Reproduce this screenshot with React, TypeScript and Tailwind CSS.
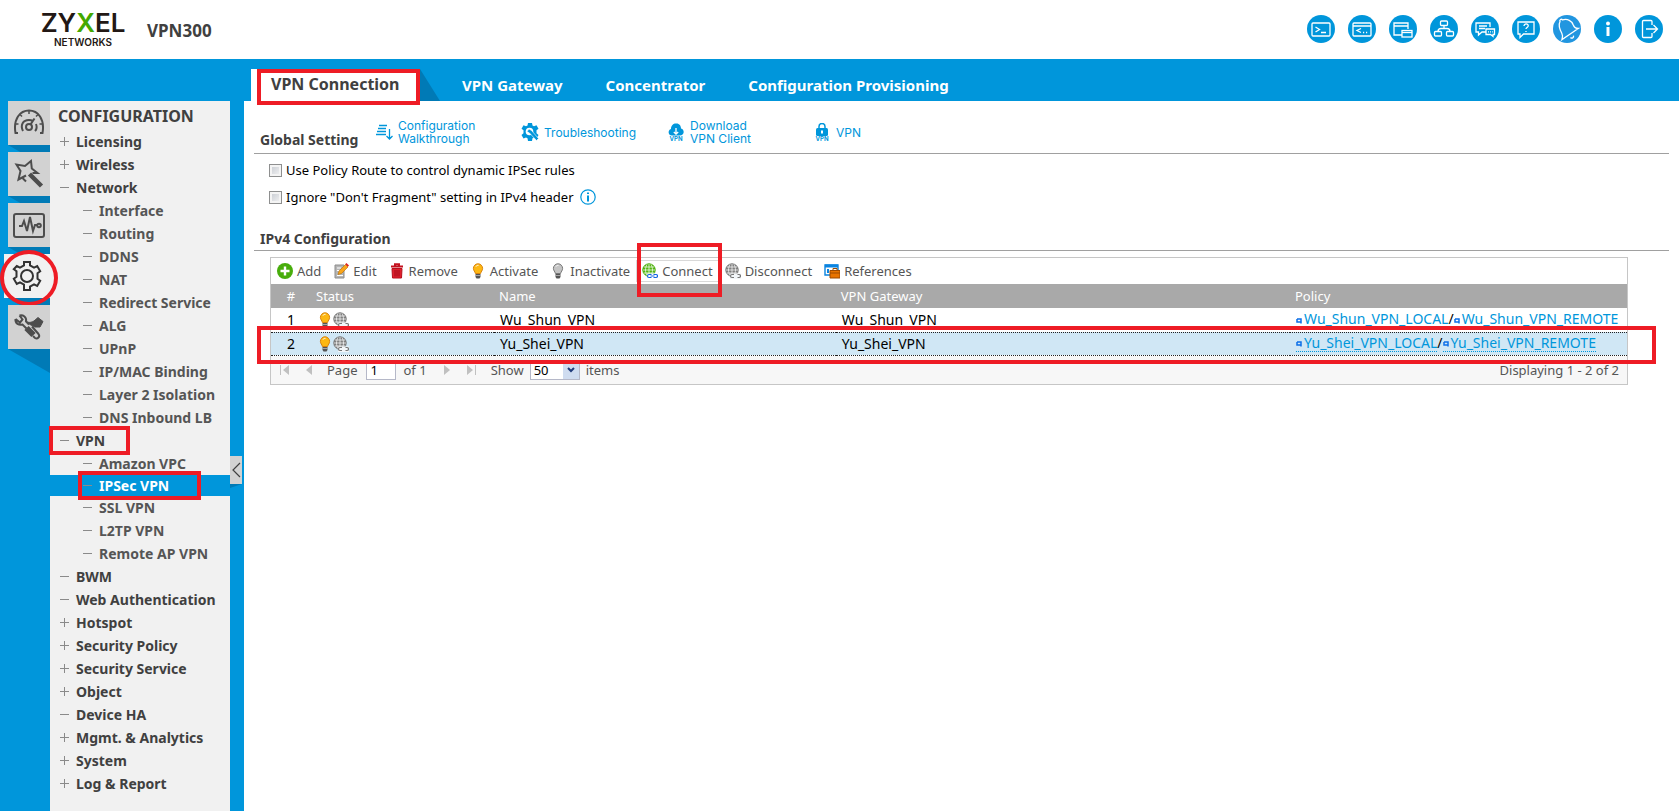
import React, { useState } from 'react';

interface MenuEntry {
  label: string;
  mark: '+' | '-';
  level: 1 | 2;
}

interface Connection {
  id: number;
  name: string;
  gateway: string;
  local: string;
  remote: string;
}

const menu: MenuEntry[] = [
  { label: 'Licensing', mark: '+', level: 1 },
  { label: 'Wireless', mark: '+', level: 1 },
  { label: 'Network', mark: '-', level: 1 },
  { label: 'Interface', mark: '-', level: 2 },
  { label: 'Routing', mark: '-', level: 2 },
  { label: 'DDNS', mark: '-', level: 2 },
  { label: 'NAT', mark: '-', level: 2 },
  { label: 'Redirect Service', mark: '-', level: 2 },
  { label: 'ALG', mark: '-', level: 2 },
  { label: 'UPnP', mark: '-', level: 2 },
  { label: 'IP/MAC Binding', mark: '-', level: 2 },
  { label: 'Layer 2 Isolation', mark: '-', level: 2 },
  { label: 'DNS Inbound LB', mark: '-', level: 2 },
  { label: 'VPN', mark: '-', level: 1 },
  { label: 'Amazon VPC', mark: '-', level: 2 },
  { label: 'IPSec VPN', mark: '-', level: 2 },
  { label: 'SSL VPN', mark: '-', level: 2 },
  { label: 'L2TP VPN', mark: '-', level: 2 },
  { label: 'Remote AP VPN', mark: '-', level: 2 },
  { label: 'BWM', mark: '-', level: 1 },
  { label: 'Web Authentication', mark: '-', level: 1 },
  { label: 'Hotspot', mark: '+', level: 1 },
  { label: 'Security Policy', mark: '+', level: 1 },
  { label: 'Security Service', mark: '+', level: 1 },
  { label: 'Object', mark: '+', level: 1 },
  { label: 'Device HA', mark: '-', level: 1 },
  { label: 'Mgmt. & Analytics', mark: '+', level: 1 },
  { label: 'System', mark: '+', level: 1 },
  { label: 'Log & Report', mark: '+', level: 1 },
];

const connections: Connection[] = [
  {
    id: 1,
    name: 'Wu_Shun_VPN',
    gateway: 'Wu_Shun_VPN',
    local: 'Wu_Shun_VPN_LOCAL',
    remote: 'Wu_Shun_VPN_REMOTE',
  },
  {
    id: 2,
    name: 'Yu_Shei_VPN',
    gateway: 'Yu_Shei_VPN',
    local: 'Yu_Shei_VPN_LOCAL',
    remote: 'Yu_Shei_VPN_REMOTE',
  },
];

// Header shortcuts, drawn in white on a 28px disc
const shortcuts: { label: string; fill?: string; art: React.ReactNode }[] = [
  {
    label: 'Console',
    art: (
      <>
        <rect x="5" y="8" width="18" height="13" rx="1" />
        <path d="M8.500 12l4 2.500-4 2.500M14 17.500h5" />
      </>
    ),
  },
  {
    label: 'CLI',
    art: (
      <>
        <rect x="5" y="8" width="18" height="13" rx="1" />
        <path d="M5 11h18M13 13.500l-4 2 4 2M15 17.500h1.200M18 17.500h1.200" />
      </>
    ),
  },
  {
    label: 'Site Map',
    art: (
      <>
        <path d="M13 20H5V8h14v6M5 11h14" />
        <rect x="13" y="15.500" width="10" height="6.500" />
        <path d="M13 17.500h10" />
      </>
    ),
  },
  {
    label: 'Object Reference',
    art: (
      <>
        <rect x="10.500" y="6" width="7" height="4.500" rx="1" />
        <rect x="4.500" y="16.500" width="7" height="4.500" rx="1" />
        <rect x="16.500" y="16.500" width="7" height="4.500" rx="1" />
        <path d="M14 10.500v3M8 16.500c0-2.500 1-3 3-3h6c2 0 3 .5 3 3" />
      </>
    ),
  },
  {
    label: 'Forum',
    art: (
      <>
        <path d="M15 17h-4l-3.500 3v-3H5V8h14v4M8 11h8M8 13.500h6" />
        <path d="M15 14h8.500v5.500H22v2l-2.500-2H15z" />
        <path d="M17 16.800h1M19 16.800h1M21 16.800h.8" />
      </>
    ),
  },
  {
    label: 'Help',
    art: (
      <>
        <path d="M6 7h16v12H11.500L8 22.500V19H6z" />
        <path d="M12 11c0-3 4.500-2.500 4.200 0-.2 1.500-2.200 1.500-2.200 3M14 16v1" />
      </>
    ),
  },
  {
    label: 'Notifications',
    fill: '#2196e0',
    art: (
      <>
        <path d="M7 6.500c-.8-1.800 1.300-3 2.500-1.600 5-1.500 9.500 1 10.800 5.100.8 2.300 1.500 3.500 5 3.500L9 24.500c1.200-2.500.8-4.200-.2-6.200C6.500 14 5 10.500 7 6.500z" />
        <path d="M17.500 22.500c1.500 1.500 3.500 0 3-1.800" />
      </>
    ),
  },
  {
    label: 'About',
    art: (
      <>
        <circle cx="14" cy="8.500" r="1.300" fill="#fff" />
        <path d="M14 12v9" strokeWidth="3" />
      </>
    ),
  },
  {
    label: 'Logout',
    art: (
      <>
        <path d="M17 10V6.500a1 1 0 0 0-1-1H8.500a1 1 0 0 0-1 1v15a1 1 0 0 0 1 1H16a1 1 0 0 0 1-1V18" />
        <path d="M11 14h11M18.500 10l4 4-4 4" />
      </>
    ),
  },
];

const railTabs: { label: string; art: React.ReactNode }[] = [
  {
    label: 'Dashboard',
    art: (
      <>
        <path d="M5 26H2.500C0 12 7 3.500 16 3.500S32 12 29.500 26H27" />
        <path d="M16 4v3M7 7.500l2 2M25 7.500l-2 2M2.500 17h3M26.500 17h3" strokeWidth="1.500" />
        <path d="M10 24c-3-6 0-11 6-11 2 0 3 .5 4 1M23 17c1 2.500 1 5-1 7" />
        <circle cx="16" cy="20" r="3" />
        <path d="M17.500 17.500l4-6" />
      </>
    ),
  },
  {
    label: 'Wizard',
    art: (
      <>
        <path d="M13 17.500l-7.500 4 2-8.500-4-6.500 8.500 1.500 6-5 .8 7.500 5.700 4.500h-5" />
        <path d="M16.500 16L28.500 28" strokeWidth="4.500" />
        <path d="M9.500 20l3.500 3.500" />
      </>
    ),
  },
  {
    label: 'Monitor',
    art: (
      <>
        <rect x="1" y="5" width="30" height="23" rx="2" />
        <path d="M6 17h3l2-5 3 10 3-14 3 14 2-6h2" />
        <circle cx="26" cy="16.500" r="1.800" />
      </>
    ),
  },
  {
    label: 'Configuration',
    art: (
      <>
        <path d="M13 5.500V2h6v3.500l4 2.200 3.200-1.700 3 5.200-2.700 2v5.600l2.700 2-3 5.200-3.200-1.700-4 2.200V30h-6v-5.500l-4-2.200L5.800 24l-3-5.200 2.700-2v-5.600l-2.700-2L5.800 6 9 7.700z" />
        <circle cx="16" cy="16" r="6" />
      </>
    ),
  },
  {
    label: 'Maintenance',
    art: (
      <>
        <path d="M2.500 8c-.5 4.500 3.500 6.500 7 5.500l4 4M6.500 4.500c3.500-1 7.500 1.500 6.500 6l3 3M6.500 4.500l3 4-2.500 3-4.500-3.500" />
        <path d="M14 11c3 1 5 0 7-1l4-3.500 5 4-3 5.500h-5l-5-2.500z" fill="#4d4d4d" strokeWidth="1" />
        <path d="M13.500 17l7 7" strokeWidth="6" />
        <path d="M19 15.500l6.500 7.500c2 2.500-1 5.500-3.500 4l-2-2" />
      </>
    ),
  },
];

// Red callout frames laid over the parts of the page to look at
const callout = 'pointer-events-none absolute z-20 border-4 border-[#ee1c25]';

function Bulb({ on }: { on: boolean }) {
  return (
    <svg viewBox="0 0 16 16" className="h-4 w-4 shrink-0">
      <path
        d="M8 .8a4.600 4.600 0 0 1 4.600 4.600c0 2.200-1.600 3-2 5.100H5.400c-.4-2.100-2-2.900-2-5.100A4.600 4.600 0 0 1 8 .8z"
        fill={on ? '#fdb813' : '#c4c4c4'}
        stroke={on ? '#d9820b' : '#777'}
      />
      <path d="M6 3.500c.5-.9 1.500-1.300 2.500-1.200" stroke="#fff" fill="none" />
      <path d="M5.500 11h5v3l-1 1.500h-3l-1-1.500z" fill="#555" />
      <path d="M5.500 12.500h5" stroke="#bbb" strokeWidth=".8" />
    </svg>
  );
}

function Globe({ linked }: { linked: boolean }) {
  const color = linked ? '#4caf0f' : '#7a7a7a';
  return (
    <svg viewBox="0 0 16 16" className="h-4 w-4 shrink-0" fill="none">
      <circle cx="7" cy="7" r="6.200" fill={linked ? '#54b512' : '#808080'} stroke={color} />
      <path
        d="M7 1v12M1 7h12M2 4h10M2 10h10M5 1.500C3 5 3 9 5 12.500M9 1.500c2 3.500 2 7.500 0 11"
        stroke="#fff"
        strokeWidth=".7"
      />
      <path d="M5 10.500h11V16H5z" fill={linked ? '#fff' : '#f2f6f9'} />
      <path
        d={
          linked
            ? 'M9.500 11.500H7a1.500 1.500 0 0 0 0 3h2.500M11.500 11.500H14a1.500 1.500 0 0 1 0 3h-2.500M8.500 13h4'
            : 'M9 11.500H7a1.500 1.500 0 0 0 0 3h2M12.500 11.500h1.500a1.500 1.500 0 0 1 0 3h-1.500'
        }
        stroke={linked ? '#1565e0' : '#777'}
        strokeWidth="1.200"
      />
    </svg>
  );
}

const toolbar: { label: string; icon: React.ReactNode }[] = [
  {
    label: 'Add',
    icon: (
      <svg viewBox="0 0 16 16" className="h-4 w-4 shrink-0">
        <circle cx="8" cy="8" r="8" fill="#48ad0c" />
        <path d="M8 3.500v9M3.500 8h9" stroke="#fff" strokeWidth="2.400" />
      </svg>
    ),
  },
  {
    label: 'Edit',
    icon: (
      <svg viewBox="0 0 16 16" className="h-4 w-4 shrink-0">
        <path d="M2 2h9v13H2z" fill="#b5b5b5" stroke="#8d8d8d" />
        <path d="M4 5h4M4 7.500h3M4 12.500h6" stroke="#fff" />
        <path d="M5 11.500l1-3.500 6.500-6.500 2.500 2.500L8.500 10.500z" fill="#f9a51a" stroke="#b96b00" strokeWidth=".6" />
        <path d="M12.200 1.200L13.400 0 16 2.600 14.800 3.800z" fill="#d22" />
      </svg>
    ),
  },
  {
    label: 'Remove',
    icon: (
      <svg viewBox="0 0 16 16" className="h-4 w-4 shrink-0">
        <path d="M2 3.500h12M6 2.500V1.300h4v1.200" stroke="#c4121f" strokeWidth="2" fill="none" />
        <path d="M3 5.500h10L12.500 15h-9z" fill="#e01f2d" stroke="#b50f1b" />
        <path d="M6 7v6.500M8 7v6.500M10 7v6.500" stroke="#8f0711" strokeWidth=".8" />
      </svg>
    ),
  },
  { label: 'Activate', icon: <Bulb on /> },
  { label: 'Inactivate', icon: <Bulb on={false} /> },
  { label: 'Connect', icon: <Globe linked /> },
  { label: 'Disconnect', icon: <Globe linked={false} /> },
  {
    label: 'References',
    icon: (
      <svg viewBox="0 0 16 16" className="h-4 w-4 shrink-0">
        <path d="M1 2h13v10H1z" fill="#fff" stroke="#0a84e0" strokeWidth="1.400" />
        <path d="M1 3h13" stroke="#0a84e0" strokeWidth="3" />
        <path d="M3 6h2v4H3z" fill="#0a84e0" />
        <path d="M6 7.500h10V15H6z" fill="#e87400" stroke="#9c4a00" />
        <path d="M9 7V5.500h4V7M6 10h10" stroke="#9c4a00" fill="none" />
      </svg>
    ),
  },
];

const quickLinks: { label: React.ReactNode; width: string; icon: React.ReactNode }[] = [
  {
    label: (
      <>
        Configuration
        <br />
        Walkthrough
      </>
    ),
    width: 'w-[146px]',
    icon: (
      <svg viewBox="0 0 18 18" className="h-[18px] w-[18px]" fill="none" stroke="#0096db" strokeWidth="1.300">
        <path d="M4 2.500h8M3 5.500h8M2 8.500h9M1 11.500h10M14.500 6v9.500M11.500 13l3 3 3-3" />
      </svg>
    ),
  },
  {
    label: 'Troubleshooting',
    width: 'w-[146px]',
    icon: (
      <svg viewBox="0 0 18 18" className="h-[18px] w-[18px]">
        <path
          d="M7 0h4l.5 2.500 1.500.8 2.500-1 2 3.400-2 1.600v3l2 1.700-2 3.400-2.500-1-1.500.8L11 18H7l-.5-2.800-1.500-.8-2.500 1-2-3.400 2-1.700v-3l-2-1.600 2-3.400 2.500 1 1.500-.8z"
          fill="#0096db"
        />
        <circle cx="8.500" cy="8.500" r="3.800" fill="#fff" />
        <path d="M8 6l2.500 1.500 7 8-2 2-7-7.500L6 8.500z" fill="#0096db" stroke="#fff" strokeWidth=".6" />
      </svg>
    ),
  },
  {
    label: (
      <>
        Download
        <br />
        VPN Client
      </>
    ),
    width: 'w-[146px]',
    icon: (
      <svg viewBox="0 0 18 18" className="h-[18px] w-[18px]">
        <path d="M5 12.500C1 12.500.5 7 4 6 4 2 7 0 9.500.5c3 0 4.500 2.500 4.500 5 4 1 3.500 7-1 7z" fill="#0096db" />
        <path d="M9 5v6M6.800 9L9 11.200 11.200 9" stroke="#fff" strokeWidth="1.300" fill="none" />
        <text x="9" y="18" textAnchor="middle" fontSize="6" fontWeight="700" fill="#0096db">VPN</text>
      </svg>
    ),
  },
  {
    label: 'VPN',
    width: 'w-[60px]',
    icon: (
      <svg viewBox="0 0 18 18" className="h-[18px] w-[18px]">
        <path d="M6 6V3.500a3 3 0 0 1 6 0V6" stroke="#0096db" strokeWidth="1.500" fill="none" />
        <rect x="3" y="5" width="12" height="8" rx="1.500" fill="#0096db" />
        <path d="M9 7.500v3" stroke="#fff" strokeWidth="2" />
        <text x="9" y="18" textAnchor="middle" fontSize="6" fontWeight="700" fill="#0096db">VPN</text>
      </svg>
    ),
  },
];

function Mark({ kind }: { kind: '+' | '-' }) {
  return (
    <svg viewBox="0 0 9 9" className="h-[9px] w-[9px] shrink-0" stroke="#8a8a8a" fill="none">
      <path d={kind === '+' ? 'M0 4.500h9M4.500 0v9' : 'M0 4.500h9'} />
    </svg>
  );
}

function Tag() {
  return (
    <svg viewBox="0 0 6 6" className="mr-[2px] inline-block h-[6px] w-[6px]" fill="none" stroke="#0b6fe8" strokeWidth="1.500">
      <path d="M1 1h4v4.500M1 1v3h4" />
    </svg>
  );
}

function PageArrow({ label, d }: { label: string; d: string }) {
  return (
    <button type="button" aria-label={label} className="flex h-4 w-4 items-center justify-center">
      <svg viewBox="0 0 12 12" className="h-3 w-3" fill="#c0c0c0" stroke="none">
        <path d={d} />
      </svg>
    </button>
  );
}

function Header() {
  return (
    <header className="flex h-[59px] items-start justify-between pl-[39px] pr-4">
      <div className="flex items-center gap-5 pt-[10px]">
        <div className="flex w-[88px] flex-col items-center font-[Inter,sans-serif] text-[#231815]">
          <span className="text-[26px] leading-[26px] font-semibold">
            ZY<span className="text-[#43a800]">X</span>EL
          </span>
          <span className="text-[10px] leading-3 font-semibold">NETWORKS</span>
        </div>
        <h1 className="pt-1 text-[17px] font-bold text-[#404040]">VPN300</h1>
      </div>
      <nav className="flex gap-[13px] pt-[15px]">
        {shortcuts.map((item) => (
          <button key={item.label} type="button" aria-label={item.label} className="h-7 w-7">
            <svg viewBox="0 0 28 28" className="h-7 w-7" fill="none" stroke="#fff" strokeWidth="1.300">
              <circle cx="14" cy="14" r="14" fill={item.fill ?? '#0096db'} stroke="none" />
              {item.art}
            </svg>
          </button>
        ))}
      </nav>
    </header>
  );
}

function Rail() {
  return (
    <div className="flex w-[50px] shrink-0 flex-col items-end">
      {railTabs.map((tab) => {
        const active = tab.label === 'Configuration';
        return (
          <React.Fragment key={tab.label}>
            <button
              type="button"
              aria-label={tab.label}
              className={
                active
                  ? 'relative z-10 flex h-11 w-[46px] items-center justify-center bg-[#f1f1f1]'
                  : 'relative z-10 flex h-11 w-[42px] items-center justify-center bg-[#d2d2d2]'
              }
            >
              <svg
                viewBox="0 0 32 32"
                className="h-8 w-8"
                fill="none"
                stroke={active ? '#333' : '#4d4d4d'}
                strokeWidth="2"
              >
                {tab.art}
              </svg>
              {active && <span className={`${callout} -top-1 -left-1 h-14 w-[58px] rounded-[50%]`} />}
            </button>
            <svg viewBox="0 0 42 24" className="-mb-[17px] h-6 w-[42px]">
              <path d="M0 0h42v24z" fill="#007ab6" />
            </svg>
          </React.Fragment>
        );
      })}
    </div>
  );
}

function SideMenu() {
  return (
    <nav className="w-[180px] shrink-0 bg-[#f1f1f1] pt-px">
      <h2 className="pl-2 text-base leading-7 font-bold text-[#404040]">CONFIGURATION</h2>
      <ul className="text-sm font-bold">
        {menu.map((item) => {
          const selected = item.label === 'IPSec VPN';
          const indent = item.level === 1 ? 'pl-[10px]' : 'pl-[33px]';
          const look = selected
            ? 'h-[21px] bg-[#0096db] text-white'
            : item.level === 1
              ? 'h-[23px] text-[#404040]'
              : 'h-[23px] text-[#555]';
          return (
            <li key={item.label} className={`relative flex items-center ${indent} ${look}`}>
              <a href="#" className="flex items-center gap-[7px] whitespace-nowrap">
                <Mark kind={item.mark} />
                {item.label}
              </a>
              {item.label === 'VPN' && <span className={`${callout} -inset-y-[3px] -left-px w-[81px]`} />}
              {selected && <span className={`${callout} -inset-y-1 left-7 w-[123px]`} />}
            </li>
          );
        })}
      </ul>
    </nav>
  );
}

function ConnectionTable() {
  const [selected, setSelected] = useState(2);

  return (
    <div className="mt-[6px] mr-[41px] ml-4 border border-[#c6c6c6] bg-[#f7f7f7]">
      <div className="flex h-[26px] items-center bg-white text-[#555]">
        {toolbar.map((item) => (
          <button
            key={item.label}
            type="button"
            className={`relative flex h-[22px] items-center gap-1 border px-[5px] ${
              item.label === 'Connect' ? 'border-[#d9d9d9]' : 'border-transparent'
            }`}
          >
            {item.icon}
            {item.label}
            {item.label === 'Connect' && <span className={`${callout} -top-[18px] -right-1 left-0 h-[54px]`} />}
          </button>
        ))}
      </div>
      <div className="relative">
        <table className="w-full table-fixed border-collapse bg-white text-left">
          <colgroup>
            <col className="w-[40px]" />
            <col className="w-[13.5%]" />
            <col className="w-[25.2%]" />
            <col className="w-[33.5%]" />
            <col />
          </colgroup>
          <thead>
            <tr className="h-6 bg-[#a9a9a9] text-white">
              <th className="text-center font-normal">#</th>
              <th className="pl-[5px] font-normal">Status</th>
              <th className="pl-[5px] font-normal">Name</th>
              <th className="pl-[5px] font-normal">VPN Gateway</th>
              <th className="pl-[5px] font-normal">Policy</th>
            </tr>
          </thead>
          <tbody className="text-sm">
            {connections.map((row) => (
              <tr
                key={row.id}
                onClick={() => setSelected(row.id)}
                className={
                  row.id === selected
                    ? 'h-[23px] border-y border-dotted border-[#222] bg-[#d0e7f5] text-black'
                    : 'h-6 text-black'
                }
              >
                <td className="text-center leading-4">{row.id}</td>
                <td className="pl-[6px]">
                  <span className="flex">
                    <Bulb on />
                    <Globe linked={false} />
                  </span>
                </td>
                <td className="pl-[6px] leading-4">{row.name}</td>
                <td className="pl-[6px] leading-4">{row.gateway}</td>
                <td className="pl-[6px] leading-4 whitespace-nowrap">
                  <a href="#" className="inline-block border-b border-dotted border-[#0096db] text-[#0096db]">
                    <Tag />
                    {row.local}
                  </a>
                  /
                  <a href="#" className="inline-block border-b border-dotted border-[#0096db] text-[#0096db]">
                    <Tag />
                    {row.remote}
                  </a>
                </td>
              </tr>
            ))}
          </tbody>
        </table>
        <span className={`${callout} -right-[29px] -bottom-2 -left-[14px] h-[38px]`} />
      </div>
      <div className="flex h-7 items-center justify-between pr-2 pl-[6px] text-[#555]">
        <div className="flex items-center">
          <PageArrow label="First page" d="M1 1h1v10H1zM10 1v10L4 6z" />
          <span className="w-2" />
          <PageArrow label="Previous page" d="M9 1v10L3 6z" />
          <label className="ml-[10px] flex items-center gap-2">
            Page
            <input
              type="text"
              defaultValue="1"
              className="h-5 w-[30px] border border-[#b5b8c8] bg-white px-1 text-black outline-none"
            />
          </label>
          <span className="mr-[12px] ml-2">of 1</span>
          <PageArrow label="Next page" d="M3 1v10l6-5z" />
          <span className="w-2" />
          <PageArrow label="Last page" d="M2 1v10l6-5zM10 1h1v10h-1z" />
          <label className="ml-3 flex items-center gap-[6px]">
            Show
            <span className="relative flex h-5 w-[50px] border border-[#b5b8c8] bg-white">
              <select defaultValue="50" className="w-full appearance-none bg-transparent pl-[3px] text-black outline-none">
                <option value="30">30</option>
                <option value="50">50</option>
                <option value="100">100</option>
              </select>
              <span className="pointer-events-none absolute inset-y-0 right-0 flex w-4 items-center justify-center bg-[#cfdcf0]">
                <svg viewBox="0 0 8 6" className="h-[6px] w-2" fill="none" stroke="#1f3b7a" strokeWidth="2">
                  <path d="M1 1l3 3 3-3" />
                </svg>
              </span>
            </span>
          </label>
          <span className="ml-[6px]">items</span>
        </div>
        <span>Displaying 1 - 2 of 2</span>
      </div>
    </div>
  );
}

const checkbox =
  'h-[13px] w-[13px] appearance-none border border-[#8e8f8f] bg-linear-to-br from-[#c4c8cf] to-[#f6f6f6] shadow-[inset_0_0_0_2px_#f4f4f4] checked:bg-[#0096db]';

const tabs = ['VPN Gateway', 'Concentrator', 'Configuration Provisioning'];

export default function App() {
  return (
    <div className="flex min-h-screen flex-col bg-white font-['Noto_Sans',sans-serif] text-[13px] leading-4">
      <Header />
      <div className="flex h-[42px] items-end bg-[#0096db] pl-[251px] text-[15px] font-bold text-white">
        <div className="relative flex h-8 w-[169px] items-center bg-white pb-[2px] pl-5 text-base">
          <a href="#" className="whitespace-nowrap text-[#404040]">VPN Connection</a>
          <span className={`${callout} top-0 right-0 -bottom-1 left-[6px]`} />
        </div>
        <svg viewBox="0 0 20 32" className="h-8 w-5">
          <path d="M0 0l20 32H0z" fill="#007ab6" />
        </svg>
        <nav className="flex h-8 items-center gap-[43px] pl-[22px]">
          {tabs.map((tab) => (
            <a key={tab} href="#" className="whitespace-nowrap">{tab}</a>
          ))}
        </nav>
      </div>

      <div className="flex grow bg-[#0096db]">
        <Rail />
        <SideMenu />
        <div className="grid w-[14px] shrink-0 grid-rows-2">
          <div />
          <div>
            <button type="button" aria-label="Collapse menu" className="flex h-7 w-3 items-center justify-center bg-[#d2d2d2]">
              <svg viewBox="0 0 10 16" className="h-4 w-[10px]" fill="none" stroke="#404040" strokeWidth="1.200">
                <path d="M9 1L2 8l7 7" />
              </svg>
            </button>
            <svg viewBox="0 0 12 4" className="block h-1 w-3">
              <path d="M0 0h12L0 4z" fill="#007ab6" />
            </svg>
          </div>
        </div>

        <main className="grow bg-white pr-[10px] pl-[10px]">
          <div className="flex h-[53px] border-b border-[#a0a0a0] pl-[6px]">
            <h3 className="w-[115px] pt-[31px] text-sm leading-4 font-bold whitespace-nowrap text-[#404040]">Global Setting</h3>
            <div className="flex h-[44px] items-center self-start pt-[18px] font-[Inter,sans-serif] text-xs leading-[13px] text-[#0096db]">
              {quickLinks.map((link, i) => (
                <a key={i} href="#" className={`flex items-center gap-[5px] ${link.width}`}>
                  {link.icon}
                  <span>{link.label}</span>
                </a>
              ))}
            </div>
          </div>
          <div className="flex flex-col gap-[11px] pt-2 pl-[15px] text-black">
            <label className="flex items-center gap-1">
              <input type="checkbox" className={checkbox} />
              Use Policy Route to control dynamic IPSec rules
            </label>
            <div className="flex items-center gap-[6px]">
              <label className="flex items-center gap-1">
                <input type="checkbox" className={checkbox} />
                Ignore "Don't Fragment" setting in IPv4 header
              </label>
              <svg viewBox="0 0 16 16" className="h-4 w-4" fill="none" stroke="#0096db" strokeWidth="1.200">
                <circle cx="8" cy="8" r="7.200" />
                <path d="M8 3.500v1.600M8 6.500v6" strokeWidth="2" />
              </svg>
            </div>
          </div>
          <h3 className="mt-[25px] border-b border-[#a0a0a0] pb-[2px] pl-[6px] text-sm leading-[18px] font-bold text-[#404040]">IPv4 Configuration</h3>
          <ConnectionTable />
        </main>
      </div>
    </div>
  );
}
